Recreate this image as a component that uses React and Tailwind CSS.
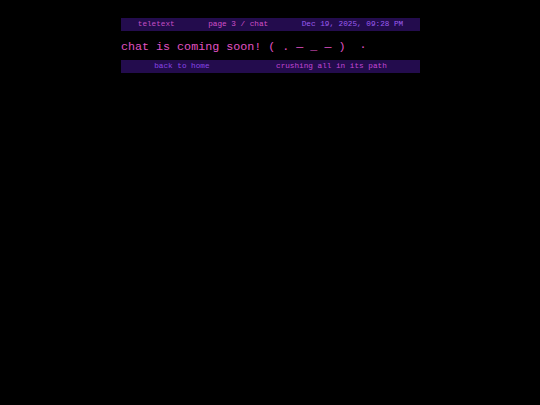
import React from "react";

const mono = { fontFamily: '"Liberation Mono", "DejaVu Sans Mono", monospace' };

export default function App() {
  const now = "Dec 19, 2025, 09:28 PM";

  return (
    <div className="min-h-screen bg-black" style={mono}>
      <div className="w-[299px] ml-[121px] pt-[18px]">
        {/* Header bar */}
        <div className="h-[13px] bg-[#230c4d] flex items-center justify-around text-[7.7px] leading-none">
          <span className="text-[#c44fc4]">teletext</span>
          <span className="text-[#d150c8]">page 3 / chat</span>
          <span className="text-[#9b5cf0]">{now}</span>
        </div>

        {/* Heading */}
        <h1 className="mt-[10px] text-[11.7px] leading-[13px] text-[#e052c4] whitespace-pre">
          {"chat is coming soon! ( . — _ — )  ·"}
        </h1>

        {/* Footer bar */}
        <div className="mt-[6px] h-[13px] bg-[#230c4d] flex items-center justify-around text-[7.7px] leading-none">
          <span className="text-[#8a45e6]">back to home</span>
          <span className="text-[#c247d6]">crushing all in its path</span>
        </div>
      </div>
    </div>
  );
}
